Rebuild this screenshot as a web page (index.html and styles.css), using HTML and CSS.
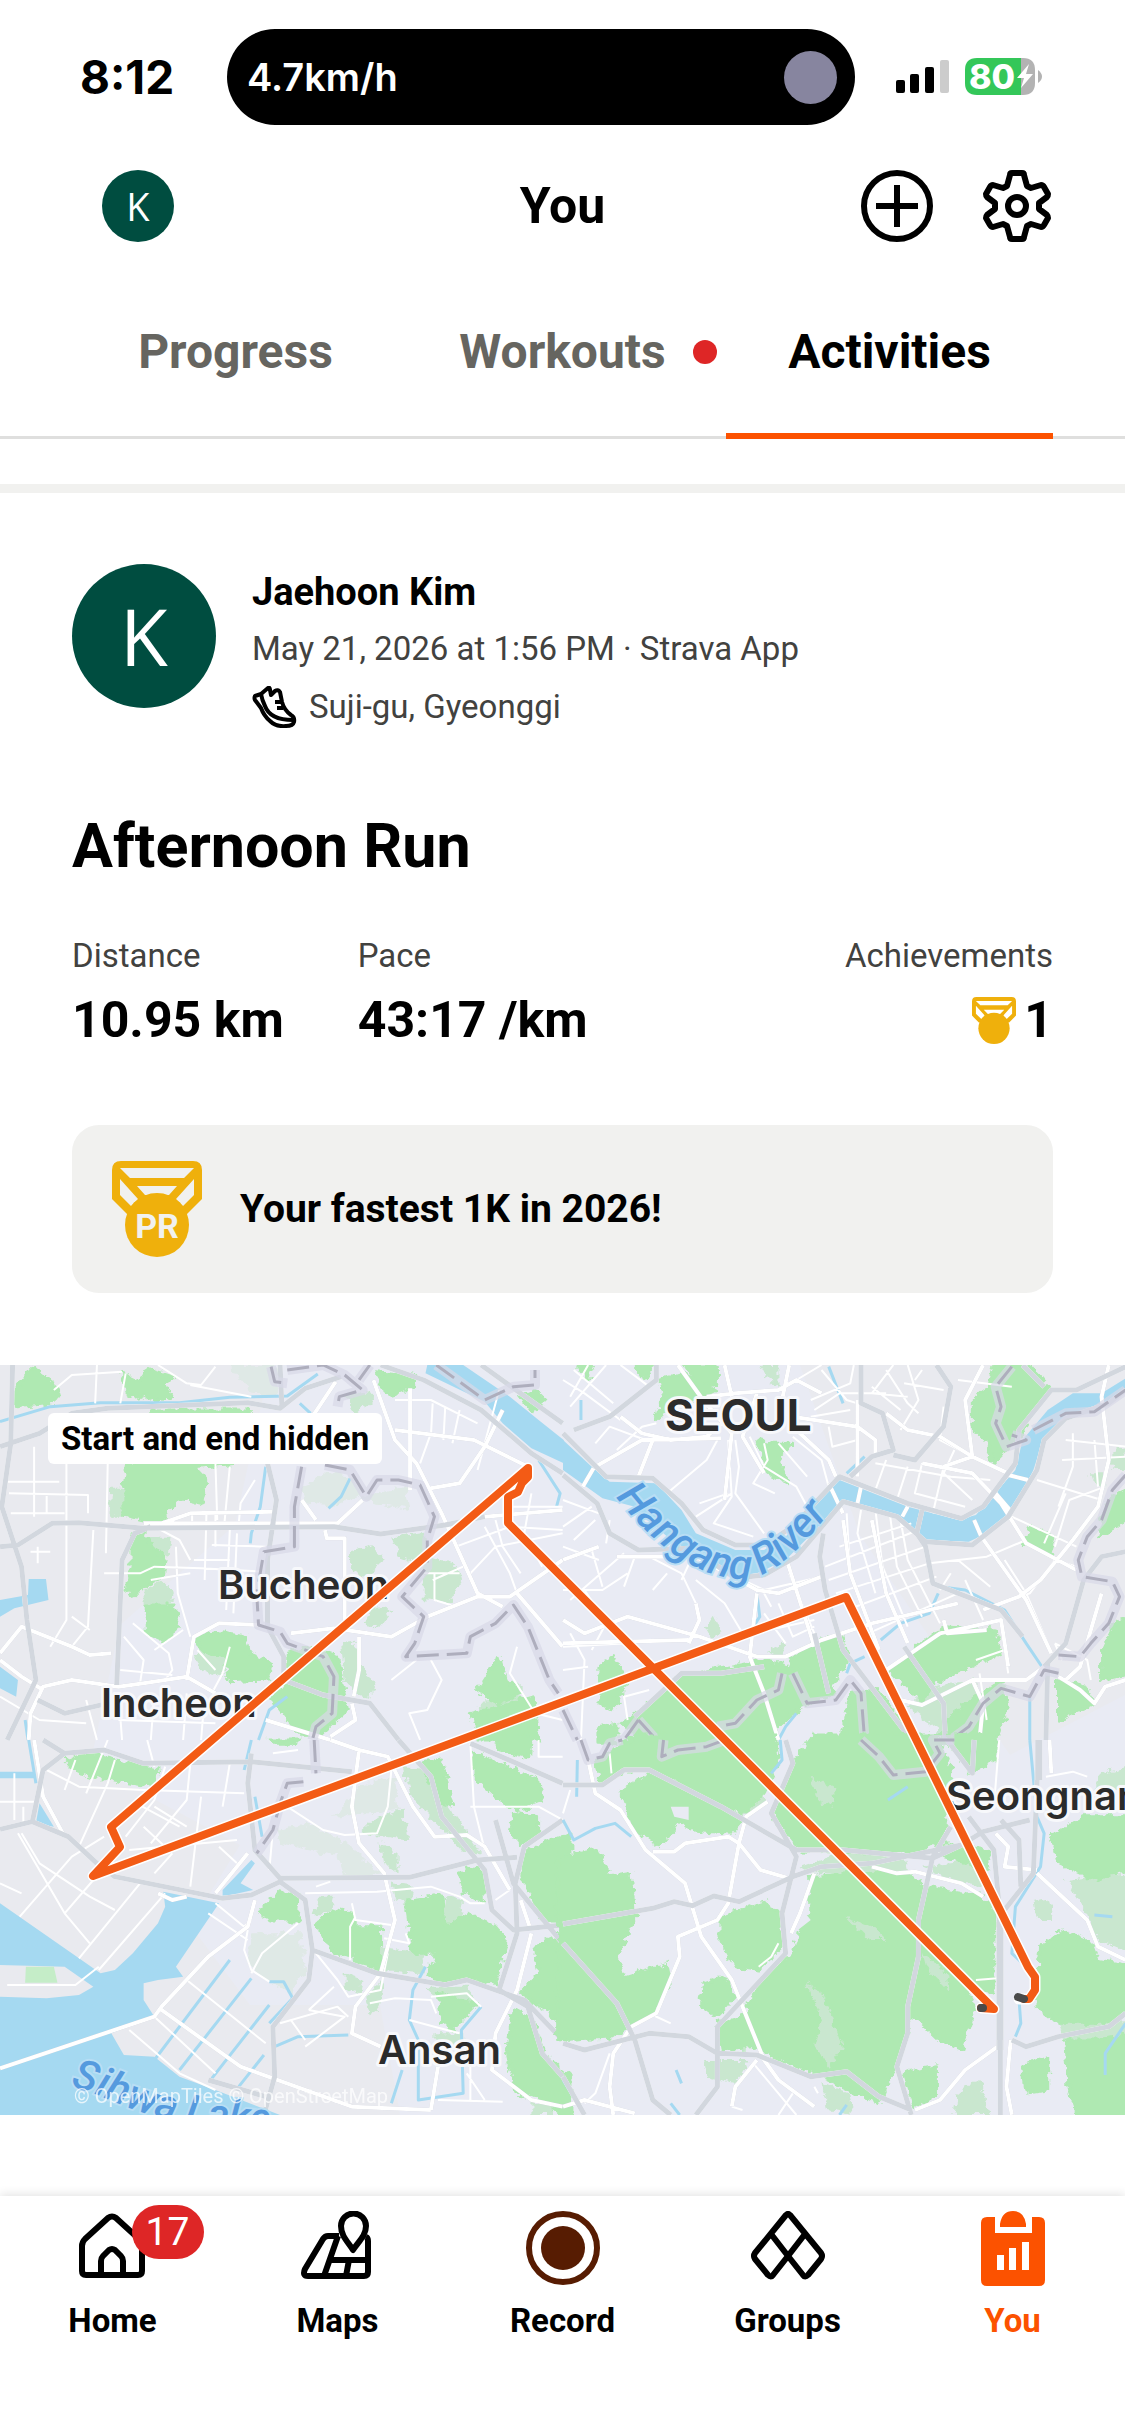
FILE: index.html
```html
<!DOCTYPE html>
<html lang="en">
<head>
<meta charset="utf-8">
<meta name="viewport" content="width=device-width, initial-scale=1">
<title>You – Activities</title>
<link rel="stylesheet" href="styles.css">
</head>
<body>
<div class="status">
  <span class="clock">8:12</span>
  <div class="island"><span>4.7km/h</span><i class="island-dot"></i></div>
  <div class="status-icons">
    <svg class="signal" viewBox="0 0 54 34" aria-hidden="true">
      <rect x="0" y="20" width="9" height="13" rx="2"/><rect x="14" y="14" width="9" height="19" rx="2"/><rect x="29" y="7" width="9" height="26" rx="2"/><rect x="44" y="0" width="9" height="33" rx="2" fill="#ccc"/>
    </svg>
    <svg class="battery" viewBox="0 0 78 38" role="img" aria-label="Battery 80%, charging">
      <path d="M12 0H56V37H12Q0 37 0 25V12Q0 0 12 0Z" fill="#34c759"/>
      <path d="M56 0H58Q70 0 70 12V25Q70 37 58 37H56Z" fill="#b3b3b3"/>
      <path d="M73 12Q77 15 77 18.500Q77 22 73 25Z" fill="#b3b3b3"/>
      <text x="4" y="31" class="battery-text">80</text>
      <path d="M64 6L52 20H59L56 30L68 16H61Z" fill="#fff"/>
    </svg>
  </div>
</div>

<header class="topbar">
  <button class="avatar avatar-small" aria-label="Profile">K</button>
  <h1>You</h1>
  <div class="actions">
    <button aria-label="Add"><svg viewBox="0 0 72 72"><g class="line"><circle cx="36" cy="36" r="33"/><path d="M36 15V57M15 36H57"/></g></svg></button>
    <button aria-label="Settings"><svg viewBox="-36 -36 72 72"><g class="line"><path d="M-5-33H5Q7-33 7-31L10-20L14-18L24-21Q26-21 27-19L31-12Q31-10 30-9L22-3V3L30 9Q31 10 31 12L27 19Q26 21 24 21L14 18L10 20L7 31Q7 33 5 33H-5Q-7 33-7 31L-10 20L-14 18L-24 21Q-26 21-27 19L-31 12Q-31 10-30 9L-22 3V-3L-30-9Q-31-10-31-12L-27-19Q-26-21-24-21L-14-18L-10-20L-7-31Q-7-33-5-33Z"/><circle r="9"/></g></svg></button>
  </div>
</header>

<nav class="tabs" aria-label="Sections">
  <button>Progress</button>
  <button>Workouts<i class="dot"></i></button>
  <button class="active">Activities</button>
</nav>

<main>
<article class="activity">
  <header class="athlete">
    <div class="avatar">K</div>
    <div class="who">
      <h2>Jaehoon Kim</h2>
      <p>May 21, 2026 at 1:56 PM · Strava App</p>
      <p class="place">
        <svg class="shoe" viewBox="0 0 45 42" aria-hidden="true"><path d="M3 10L9 8L16 2Q18 1 18 4L19 9L23 5Q26 3 28 6L30 16Q32 24 39 29Q43 31 42 36Q41 40 34 40Q24 41 18 35Q12 30 9 22L3 14Q2 12 3 10Z"/><path d="M9 8Q10 14 13 20Q18 34 41 34M23 16H29M25 22H31"/></svg>
        <span>Suji-gu, Gyeonggi</span>
      </p>
    </div>
  </header>
  <h3>Afternoon Run</h3>
  <dl class="stats">
    <div><dt>Distance</dt><dd>10.95 km</dd></div>
    <div><dt>Pace</dt><dd>43:17 /km</dd></div>
    <div class="achievements"><dt>Achievements</dt><dd>
      <svg class="medal-small" viewBox="0 0 90 96" aria-hidden="true"><path fill-rule="evenodd" d="M9 0H81Q90 0 90 9V38L76 52H14L0 38V9Q0 0 9 0ZM8 8H82L73 17H17ZM8 18V34L19 45L26 38ZM82 18V34L71 45L64 38ZM24 26H66L57 35H33Z"/><circle cx="45" cy="64" r="32"/></svg>1</dd></div>
  </dl>
  <div class="record-card">
    <svg class="medal" viewBox="0 0 90 96" role="img" aria-label="Personal record"><path fill-rule="evenodd" d="M9 0H81Q90 0 90 9V38L74 54H16L0 38V9Q0 0 9 0ZM8 7H82L72 17H18ZM8 18V34L19 45L26 38ZM82 18V34L71 45L64 38ZM25 25H65L57 34H33Z"/><circle cx="45" cy="64" r="32"/><text x="45" y="77" text-anchor="middle">PR</text></svg>
    <p>Your fastest 1K in 2026!</p>
  </div>
  <figure class="map">
    <svg viewBox="0 0 1125 750" role="img" aria-label="Route map from Seongnam to Incheon and Seoul">
      <defs>
        <filter id="ragged" x="-5%" y="-5%" width="110%" height="110%"><feTurbulence type="fractalNoise" baseFrequency="0.045" numOctaves="3" seed="4"/><feDisplacementMap in="SourceGraphic" scale="30" xChannelSelector="R" yChannelSelector="G"/></filter>
      </defs>
      <rect width="1125" height="750" fill="#e9ebf4"/>
      <path d="M0 0H270L235 160L120 260L90 400L240 480L190 560L250 640L380 640L400 750H0ZM800 0H1125V330L1010 390L860 170Z" fill="#e9eaef"/>

      <g transform="translate(0 -5) scale(.35906 .33333)">
        <path class="scrub" d="M640 15H770V110L700 100ZM845 380L900 340L980 350L1010 400L930 440L850 430ZM1000 410L1130 380L1140 450L1040 430Z"/>
        <path class="wood-pale" d="M310 380H345V470H305ZM975 570L1030 555L1075 600L1010 660L975 620ZM1090 530L1180 515L1200 590L1260 610L1290 660L1250 730L1180 720V620L1110 590ZM1040 740L1095 750L1060 800L1015 795ZM950 850L985 845L1010 920L1050 990L1010 1020L960 960ZM400 530H475L470 590L430 580ZM400 690L450 660L485 700L470 740H400ZM540 880L640 840L620 950L560 930ZM960 110L1020 90L1045 120L990 160ZM1390 980L1450 970L1450 1020L1330 1050Z"/>
        <path class="wood" d="M40 90L90 25L165 85L150 130L40 140ZM340 40L380 60L420 30L480 50L460 75L475 110L430 125L400 105L360 115ZM350 310L640 290L660 310L540 320L575 360L560 430L500 415L440 490L345 465V370ZM420 150H690L700 170H420ZM365 530L400 520L425 560L460 600L455 650L400 680L375 710L350 690L365 620ZM410 735H485L500 800L455 840L410 820ZM545 830L600 815L680 830L690 880L760 910L745 960L640 965L625 890L560 870ZM800 880L860 860L940 890L970 1050L900 1120H830L760 1020L800 960ZM1050 35L1155 45V75L1090 105L1060 80ZM1445 110L1490 90L1520 120L1480 155ZM1390 890L1410 960L1450 1000L1390 1030L1330 990L1360 940ZM1310 1060L1490 1010L1500 1140H1330Z"/>
        <path class="water" d="M80 657H128L135 720L40 745L0 770V720L78 705ZM1190 15H1290L1420 110L1500 180L1570 240V310L1480 265L1400 190L1350 125L1185 40ZM0 920L50 960L45 1010L0 985Z"/>
        <path class="stream" d="M0 185L140 140L280 128H500L640 112L800 108L885 42M740 320L725 440L700 520L697 550M975 355L950 410L915 445M800 1010L750 1050L720 1140M835 130L865 160M1500 300L1560 400L1550 440M70 1080L78 1140"/>
        <path class="minor" d="M22 365H165M30 460H180M25 400L245 405V460M185 300V780L140 860M95 260V470M130 400V460M300 310L295 580M260 510L245 800L200 860M270 15L265 130M350 40L335 130M150 90L200 45L340 35M440 15L520 70L560 75L600 20M530 75L700 110M85 575H140M105 560V610M290 640L390 640L430 620L560 625L730 635M420 660L530 640M490 560L495 700L530 830M600 310L605 480M640 320L625 490M710 360L670 430L665 490M430 500L500 540L530 600M535 460V500M575 460L570 660M600 460V560M640 510L630 750M660 520L650 760M540 600H640M590 555L740 560M370 790L470 880L480 930L460 960M345 830L400 900L390 970M510 810L430 870M640 860L620 940L590 1000M550 870L600 930M335 930L480 945M1100 120L1200 120L1330 190M1205 130L1200 230M1240 140L1235 240M1280 150L1260 250M1170 310L1200 220M1390 90L1330 330M1270 560L1420 500L1567 510M1310 640L1380 560L1567 520M1380 480L1400 560L1450 640M1350 500L1420 640L1440 700M1205 660L1290 620M1210 640V720L1270 740M1180 640H1280M1480 400L1460 520L1510 620M1420 440H1567M1090 960L1160 900M1200 900L1230 960L1190 1050L1140 1060L1170 1140M1440 860L1420 940L1490 1060L1567 1080M200 770L250 810M0 1010L110 1080L240 1090M240 1020L270 1140M330 1000L340 1140M430 1000L420 1140M520 1000L510 1140M570 1010L560 1140M330 1080L600 1090"/>
        <path class="major" d="M1040 60L1100 240L1160 310L1230 460L1330 700L1400 740M1100 210L1320 240L1470 320M1400 150L1350 260L1280 370L1200 385M450 490L530 460L760 455M400 490H940L1010 420M905 510L910 535H960V790M810 820L930 805L1090 830L1190 770L1330 710H1420L1567 600M520 960L540 830L610 790L720 795M0 880L60 800L200 860L250 885L310 880M80 1140L85 1060L120 980L200 960L330 980L400 970L520 950L600 1000M1000 830V930L985 1010M870 170L935 65M1142 85V390M1350 470L1567 450M1567 860L1440 700M840 420L880 480M0 900L60 950L120 990M740 1080L830 1110L920 1140M980 1030L990 1080L920 1130"/>
        <path class="motorway" d="M35 15L30 250L5 440L60 620L75 780L100 960L20 1140M0 260L110 220L200 160L300 145L690 128L780 145L850 85L950 50M0 560L50 555L145 490L220 488L400 505L930 500L1060 522L1240 495L1350 470M325 975L340 600L375 520L420 500M745 310L770 420L745 600V800L790 890V960L900 1005L1030 1030L1110 1140M1060 15L1180 60L1340 150L1480 280L1567 340M1340 15L1567 190M780 15L785 140M105 1020L180 1060L300 1030"/>
        <path class="halo" d="M755 20L765 65L800 70M800 30L900 15L960 45L1010 90L945 110L940 140M1030 15L1000 60M1215 15L1350 120L1430 80L1490 75V30M840 320L820 440V560L735 575L715 700L720 795L780 815L800 850L900 890L930 950L925 1060L880 1100L870 1140M905 315L975 330L1020 410L1050 360H1110L1170 375L1210 470L1190 540V620L1120 710L1180 770L1155 850L1130 890L1300 880L1310 830L1380 790L1430 735L1470 800L1530 960L1555 1000"/>
        <path class="border" d="M755 20L765 65L800 70M800 30L900 15L960 45L1010 90L945 110L940 140M1030 15L1000 60M1215 15L1350 120L1430 80L1490 75V30M840 320L820 440V560L735 575L715 700L720 795L780 815L800 850L900 890L930 950L925 1060L880 1100L870 1140M905 315L975 330L1020 410L1050 360H1110L1170 375L1210 470L1190 540V620L1120 710L1180 770L1155 850L1130 890L1300 880L1310 830L1380 790L1430 735L1470 800L1530 960L1555 1000"/>
      </g>

      <g transform="translate(563 -5) scale(.35906 .33333)">
        <path class="wood-pale" d="M1020 980L1150 960L1160 1060L1080 1140L960 1040ZM550 15H600L600 80L570 60ZM400 800L420 770L440 820L420 840ZM1470 340H1510V390L1480 370ZM570 870L620 850L610 890ZM1530 270L1567 260V330H1530Z"/>
        <path class="wood" d="M270 60L330 40L430 90L370 120L310 130L260 180L280 110ZM340 15H430V70L380 80ZM40 15H85L70 60ZM200 15H250L230 60ZM540 240L580 250H640L600 290L625 365L570 340ZM1140 120L1190 80L1200 15H1300L1360 90L1320 130L1270 230L1200 310L1180 230L1140 210ZM1300 500L1370 530L1355 585L1285 550ZM910 930L1060 800L1200 810L1220 880L1150 910L1030 970L1000 1030ZM630 900L720 830H780L790 900L740 990L650 950ZM250 1150L160 1090L230 1040L310 960L420 930L560 900L700 940L760 1000L660 1040L600 1100L560 1150ZM100 920L140 890L180 960L140 1050L100 1030ZM800 1000L870 990L960 1100L980 1150H770ZM1060 1080L1220 960L1240 1040L1200 1150H1060ZM1380 960L1450 980L1480 1030L1380 1080ZM1500 870L1530 800L1580 760V940L1500 960ZM1580 380L1520 420L1490 530L1540 500L1580 470ZM100 1100L150 1090V1150H100Z"/>
        <path class="water" d="M0 240L80 320L130 365L260 370L330 450L370 520L480 570H560L620 530L740 385L770 360L960 440L1100 480L1150 465L1260 330L1280 240L1350 150L1420 100H1500L1567 55V95L1500 150L1390 180L1340 230L1310 330L1260 440L1200 510L1130 545L1010 540L970 500L920 465L780 425L740 470L620 600L540 640L480 650L400 600L300 540L200 440L110 415L0 330Z"/>
        <path class="stream" d="M740 20L780 130M50 120V180M840 290L790 340M540 700L548 770L530 800M885 840L940 790L1020 760L1045 700M1050 680L1120 690L1230 750L1290 850L1340 930M840 890L800 910L790 940M1300 1010V1140M650 1060L620 1100L600 1140"/>
        <path class="minor" d="M0 60L60 100L160 180M20 140L120 15M70 15L20 110M30 30L140 130M160 15L240 80M90 250L130 200L230 240M150 270L220 200L260 190M430 240L400 300L290 400M460 240L470 410L420 490L530 530M480 240L490 320L480 400L560 520M380 430L460 400M370 470L470 400M520 230L560 320L650 380L680 440M560 250L570 300L530 370L590 400M600 250L680 350M640 230L720 300L740 380M650 60L720 15M690 120L800 70L810 15M700 150L770 100L900 100M720 30L790 120L820 130M690 170L800 150M740 200L750 260L820 240M860 80L940 150M900 30L960 130L990 160M920 15L860 100L960 110M950 70L1060 90M960 15L990 120L940 210M1000 30L980 60M1100 60L1250 80M870 310L1080 350L1190 360M900 300L870 390M960 320L930 420M1000 310L980 400L1120 440M1060 320L1030 460M1090 270L1060 340L1140 420M1060 140L1050 240L1140 290M790 460L800 640M830 450L820 520L870 700M870 450L890 620L960 800M910 460L930 620L1000 770M940 480L960 600L1050 790M740 660L1010 560M760 700L1020 610M790 750L1040 650M830 830L1100 700M730 620L990 510M770 560L970 490M1020 610L1180 590L1290 540M1100 600L1190 680M1080 640L1050 690M1120 660L1170 780M1190 740L1300 700L1370 600M1230 600L1290 700L1350 850M1370 560L1410 420L1510 380M1340 550L1400 400M1400 240L1567 260M1390 300L1567 290M1320 360L1500 420M1250 470L1430 560M1430 620L1370 600M1420 220V320L1380 440M1480 240L1490 380M0 690H110L180 640M20 720L170 580M80 570L110 680M200 590L170 680M240 590L330 640L370 730M250 690L290 640M360 590L330 660M370 660L450 730L500 820M60 690L120 790L80 870M0 420L100 460M0 500L80 440M30 540L90 480M0 560L100 600M120 550L130 480M600 730L640 830L700 800M560 760L620 850M530 820L700 780M560 700L580 740M630 640L700 820M500 660L560 690L720 650M20 820L60 900L50 1140M0 860L180 850M0 930L70 920M1150 900L1230 870L1240 940M180 1080L170 1010L240 990M1160 940L1180 1080M1370 850L1460 900L1470 960M1390 900L1370 850"/>
        <path class="major" d="M320 15L390 120L470 220L450 420M400 110L480 100L600 90L650 60L720 100M450 15L470 110M630 15L610 120L640 200L740 300L760 350M540 100L500 230L560 340M160 170L220 220L300 240L400 230L440 190L500 210M90 320L220 240L440 235M210 350L250 240M640 170L700 180L820 200L870 240V280M820 120V350M900 160L960 210L1050 230L1140 290L1240 340M1170 15L1120 120L1140 290L1060 320M1000 310L1140 340L1220 430L1290 550L1430 630M1520 15L1500 110L1520 300L1490 440L1420 540L1330 660L1270 710L1170 750M85 325L55 380M830 380L820 430M960 440L945 470M1145 480L1165 530M1205 400L1245 450M1240 345L1295 360M780 480L800 640L880 870M860 480L900 700L960 850M740 370L780 460M0 600L100 560M150 590L370 590L540 690L600 700L720 650M540 700L520 890L560 1000L600 1140M0 780L60 820L180 770L380 830L540 890L620 890L720 840L860 790L1100 730M0 850L350 840M370 730L380 780L350 850M620 590L700 860M1165 530L1290 720L1360 880M900 930L1050 820L1220 780L1240 920M940 1020L1000 1035L1140 960H1290L1340 920M1140 960L1170 1030L1160 1140M1380 950L1440 990L1480 1030L1510 980L1567 960M1500 700L1440 920L1400 960M1060 780L1070 820L1180 810"/>
        <path class="motorway" d="M0 345L95 430L130 520L210 570L360 565L480 655L560 645L650 590L780 425L930 470L1010 545L1140 555L1240 470L1320 330L1340 240L1400 175L1520 130L1567 90M0 220L120 350L250 355L330 430L390 510L480 555H560L640 500L770 350L960 430L1110 475L1170 440L1260 310L1270 210L1360 90H1430L1567 20M830 15V130L890 160L920 270L860 290L800 350M920 285L980 300L1060 200L1080 80L1040 15M30 210L130 170L260 60V15M725 520L715 590L730 690L780 870L900 1040L970 1140M1000 450L985 520L1010 560L1030 670L1220 750L1280 830M1340 920L1400 850L1450 660L1500 590L1567 575M1350 910L1345 1140M950 860L1060 1030L1065 1140M700 820L740 1000M200 1070L330 940H380L440 940L560 920M1280 15L1340 80"/>
        <path class="halo" d="M1250 20L1205 80L1220 140L1205 190L1235 260L1290 240L1250 225M1310 210L1400 160L1480 155L1567 90M1567 345L1530 390L1500 480L1460 530L1435 600L1445 650L1530 665L1550 710L1520 790L1470 850L1440 890L1380 885M1380 940L1340 930L1300 1010L1220 985L1170 1030L1130 1100L1080 1140M610 940L600 990L540 1020L480 1090L430 1100M640 940L680 1030L760 1020L800 960L830 1000L840 1140M210 1080L260 1140M210 1080L170 1140M0 1050L40 1140"/>
        <path class="border" d="M1250 20L1205 80L1220 140L1205 190L1235 260L1290 240L1250 225M1310 210L1400 160L1480 155L1567 90M1567 345L1530 390L1500 480L1460 530L1435 600L1445 650L1530 665L1550 710L1520 790L1470 850L1440 890L1380 885M1380 940L1340 930L1300 1010L1220 985L1170 1030L1130 1100L1080 1140M610 940L600 990L540 1020L480 1090L430 1100M640 940L680 1030L760 1020L800 960L830 1000L840 1140M210 1080L260 1140M210 1080L170 1140M0 1050L40 1140"/>
      </g>

      <g transform="translate(0 375) scale(.35906 .33333)">
        <path class="scrub" d="M770 270L870 250L990 330L1060 400L960 420L940 350L780 310ZM700 580H840L850 700L810 760L740 720L690 670ZM1000 140L1100 110L1110 210L930 230Z"/>
        <path class="wood-pale" d="M1060 620L1180 640V700L1060 690ZM1120 80L1180 90L1250 200L1320 310L1340 340H1290L1220 260L1150 180ZM890 470H930L920 520H870ZM960 700L1010 720L1000 765L960 740ZM1060 310L1110 340V400L1070 370ZM1040 240L1120 210L1140 300L1000 280ZM1090 430L1150 440L1140 500L1100 480ZM1180 740L1300 740L1340 800L1220 780ZM1020 770L1070 720L1060 790L1030 830ZM1240 470L1290 480L1280 540L1230 560ZM1210 880H1290V920H1210ZM1480 1090L1540 1080V1125H1480Z"/>
        <path class="wood" d="M180 60L240 40L320 60L440 90L430 140L310 120L210 95ZM730 500L780 455L835 470L830 540L750 540L720 520ZM880 550L940 510L985 520L980 650L930 640ZM985 560L1060 560V690L990 670ZM1130 480L1230 465L1240 560L1300 520L1380 560L1410 600L1380 730L1290 715L1220 730L1190 700L1220 640L1150 640ZM1280 400L1340 375L1350 480L1290 460ZM1170 70L1230 60L1260 200L1230 190ZM1370 -15H1480L1475 50L1390 30ZM1320 40L1500 120L1510 180L1440 210L1380 170L1320 110ZM1430 220L1500 230V290L1450 310L1420 270ZM1590 280L1470 330L1450 400L1510 540H1590ZM1590 570L1490 620L1500 700L1450 760L1520 810L1590 870ZM1220 760L1330 790L1260 870L1230 840ZM1430 810L1480 840L1520 950L1590 1010V1145L1500 1070L1440 1060L1410 930ZM750 0H830V10H760Z"/>
        <path class="water" d="M0 490L280 700L320 690L370 640L440 550L460 500L455 455L610 490L490 680L510 710L440 720L400 730V780L430 830L310 880L345 945L430 950L500 1010L600 1050L780 1125H0V770L130 775L220 765L260 740L180 680L0 675ZM620 450L700 360L710 370L670 430L705 450L620 470ZM0 95H95V115H0ZM110 190L150 260L100 250Z"/>
        <path d="M72 680H150L160 728H70Z" fill="#c5edc8"/>
        <path class="stream" d="M640 660L430 960M700 715L500 990M750 795L590 1015M735 945L665 1040M970 885L830 890L765 920M1185 680L1150 750L1140 840L1165 900V1080L1290 1060L1285 870L1340 800M750 725H790L815 775L750 850M710 170L730 290M700 0L680 90M80 0L100 130M1120 990L1090 1090"/>
        <path class="minor" d="M50 280L180 520L250 610M60 280L110 370L250 470L320 510M55 530L200 350L290 290M180 520L260 420M220 655L390 430M275 690L460 460M0 430L60 460M20 735H210L275 680M0 185H95M40 100V240M65 200V245M130 90L220 140L400 150L680 160M210 60L180 150M320 60L300 130L220 320M300 0L240 160M410 0L430 80M530 70L520 180L420 310M460 80L430 180L350 290M640 70L620 200M560 170L530 440M380 190L500 260M430 200L520 260M360 330L660 300M400 260L460 320M610 320L660 370M480 340L430 400M430 830L600 1000M520 720L740 910M580 520L690 600M600 490L680 560L700 540M690 570L680 630L700 690L750 725M700 700L730 640L830 550M850 460L1050 455L1200 440L1280 470L1310 490H1350M880 440L920 425M800 200L900 270L960 285L1050 280L1080 200L1090 90M760 270L750 390M980 490L990 540L1090 555M975 660V560L990 530M880 640L940 720L970 770L1060 750L1080 640M860 810L930 740M860 810L960 830L850 920M780 850L940 800L970 830M810 840L850 900M360 870L500 1000L600 1050M1030 790L1100 775L1200 780L1215 820M1200 770L1300 760L1340 800M1310 10L1320 200L1350 330M1310 200H1500L1567 240M1500 0V50H1567M1130 580L1140 610L1070 595M1380 480L1420 450M1220 1080L1400 1085M1300 1000L1350 1080M1310 980V1080M1140 840L1210 860L1280 880M760 40L830 30"/>
        <path class="major" d="M95 0L120 170L180 290M920 0L1000 30L980 200L1000 310L1070 400L1100 540L1060 700L990 800L980 880L1060 920M1000 30L1080 50L1150 200L1210 290L1300 285L1350 320L1420 450M710 480L690 560L580 650L450 800L430 830L0 985M450 810L670 980L980 1100L1200 1110M1220 980L1200 1110M1480 580L1440 750L1380 880L1370 990L1480 1080L1567 1100M690 340L600 460M440 460L480 480L520 470M1450 480L1475 560"/>
        <path class="motorway" d="M120 0L180 40L290 30L400 70L700 65L980 95M180 40L120 90L90 245L0 268M90 245L190 290L270 370L320 410L620 475L700 465L780 425L850 480L870 630L860 720L760 860L765 1010L735 1125M700 40L690 130L710 330L780 415L1140 412L1330 360L1440 352M870 630L1050 700L1240 735L1300 720L1460 780L1567 900M1110 0L1200 110L1230 230L1350 390L1370 510L1430 570L1567 555M1380 240L1430 430L1567 610M1310 10L1567 130M1567 240L1460 320L1435 430L1440 580L1390 750L1470 800L1510 940L1567 1010M580 1020L740 1070"/>
        <path class="halo" d="M875 0L880 100M845 125L800 130L780 190L760 270L715 340"/>
        <path class="border" d="M875 0L880 100M845 125L800 130L780 190L760 270L715 340"/>
      </g>

      <g transform="translate(563 375) scale(.35906 .33333)">
        <path class="wood-pale" d="M1000 380L1150 360L1180 440L1100 430ZM1400 420L1580 400V640L1490 600L1460 520ZM390 960H520L480 1030L400 1010ZM720 1030L800 1060L810 1125L740 1110ZM1100 1060L1160 1020L1190 1125H1090ZM660 380L800 330L950 350L960 400L690 400ZM1310 480L1350 470L1370 540L1320 540ZM470 150L560 140L570 190L500 230ZM1380 850L1580 840V920L1400 900ZM1500 100L1580 80V150L1480 150Z"/>
        <path class="wood" d="M90 60L210 -15H590L600 60L560 160L500 220L440 200L260 90H170L110 130ZM160 150L250 100L440 200L500 240L470 280L360 270L330 240L270 320L200 270ZM640 70L700 -15H1040L1080 90L1060 300L980 340L660 330L590 240ZM1070 -15H1210L1200 60L1140 100ZM-15 350L100 330L130 410L190 400L200 540L150 640L170 710L290 670L300 720L250 820L180 860L140 890L-15 900ZM390 730L450 710L480 770L430 830L380 790ZM440 530L560 490L610 520V620L540 690L480 680L440 600ZM690 410L800 400H950L1020 440L1170 470L1200 520V760L1120 740L1150 800L1110 930L1050 900L970 820L930 960L880 1090L720 1010L560 940L510 800L560 720L640 640L660 560L690 520ZM1360 290L1450 230H1590V380L1480 420L1380 370ZM1330 620L1390 570L1470 610L1490 660L1590 680V800L1520 850H1380L1320 800ZM1400 900L1500 900L1590 880V1145H1440L1410 1050ZM950 1000L1040 980V1060L980 1100ZM1280 980L1350 950V1050L1290 1060ZM430 850L520 820L550 920L440 930ZM1050 310L1180 330L1190 390L1060 350Z"/>
        <path class="wood-pale" d="M790 530L860 560L900 600L850 600ZM680 730L720 760L780 920L740 980L700 920L720 840ZM1000 640L1070 700L1080 760L1010 680ZM690 110L760 150L750 200L710 180Z"/>
        <path d="M620 500L660 500L690 540L630 590ZM300 200L350 200L350 240L310 230Z" fill="#e9ebf4"/>
        <path class="stream" d="M0 240L30 300L90 265L145 250L190 290M605 0L610 60L580 100M960 140L905 180M1300 0L1320 230L1340 280L1330 380L1260 500L1250 640L1290 680M1270 780L1275 850L1260 890M1567 850L1510 940V1005M40 60L38 170M1480 525L1530 530M315 990L330 1030M0 1020L40 1090M300 1090L325 1125M790 1095L770 1125"/>
        <path class="minor" d="M530 970L650 1125M640 1060L600 1125M470 1100L500 1110M130 940L90 1060L60 1090M250 825L300 850M600 610L580 650L545 680M1150 720L1210 715M1215 0L1200 200M1345 110L1420 95L1460 110M130 40L135 100M700 1040L710 1060M20 150L0 220"/>
        <path class="major" d="M70 60L90 160L160 210L230 330L340 430L385 590L470 720L560 960L600 1020L700 1100M250 335H310L340 310L460 290L490 310L550 390L630 415M570 185L510 230L490 310L460 490L430 540L320 590L325 650L260 820L190 860L140 940L130 1040L140 1125M860 380L930 400L980 395L1110 430L1170 470M1320 400L1460 540L1490 620L1567 660M1210 920L1120 990L1050 1080L980 1110M1247 900L1235 1040L1250 1125M1355 0L1360 100M1205 280L1240 320L1230 380L1320 390M470 1100L480 1040L540 960M700 400L660 520L635 580M0 1100L60 1080L200 1120"/>
        <path class="motorway" d="M0 135H110L170 90H240L440 200L650 330H780L1030 355L1110 315L1170 275L1300 240M0 552L250 505L310 485L360 497L420 468L490 485L640 410L720 380L860 370L1040 330L1110 315M620 0L640 70L580 220L650 350L610 520L620 640L430 860V1040L370 1125M0 610L150 790L200 900L250 1080L300 1125M0 910L60 930L240 880L350 890L430 940L540 945L690 1010L790 995L880 1070L970 1110M1080 260L1030 350L990 540V650L960 800V880L930 980L970 1125M1325 0L1310 400L1215 530M1130 230L1200 330L1215 500M1250 900L1290 920L1380 890L1520 860L1567 820M1220 240L1270 300L1275 440M1145 0L1140 100L1070 0M0 1010L60 1125"/>
        <path class="motorway wide" d="M1217 500V930M1325 0V120"/><path class="motorway" d="M1218 900V1125"/>
        <path class="halo" d="M50 0L70 60L110 50L130 10L165 0M280 0L275 50L320 30L400 20L450 0M830 0L880 50L920 105L1010 95L1050 40L1030 0H1090"/>
        <path class="border" d="M50 0L70 60L110 50L130 10L165 0M280 0L275 50L320 30L400 20L450 0M830 0L880 50L920 105L1010 95L1050 40L1030 0H1090"/>
      </g>

      <g class="city">
        <text x="665" y="66" class="capital">SEOUL</text>
        <text x="218" y="234">Bucheon</text>
        <text x="101" y="352">Incheon</text>
        <text x="946" y="445">Seongnam</text>
        <text x="378" y="699">Ansan</text>
      </g>
      <path id="han" d="M616 132C650 176 694 212 740 214C782 212 810 172 856 114" fill="none"/>
      <path id="sihwa" d="M70 722C110 728 140 764 280 768" fill="none"/>
      <g class="water-name"><text><textPath href="#han">Hangang River</textPath></text><text><textPath href="#sihwa">Sihwa Lake</textPath></text></g>
      <text x="74" y="738" class="credit">© OpenMapTiles © OpenStreetMap</text>

      <path class="route-edge" d="M981 643L994 644L508 158V132L518 127L522 118L528 112V103L111 462L120 482L93 511L846 232L1028 602L1035 612V625L1029 634H1019"/>
      <path class="route" d="M981 643L994 644L508 158V132L518 127L522 118L528 112V103L111 462L120 482L93 511L846 232L1028 602L1035 612V625L1029 634H1024"/>
      <path class="route-hidden" d="M981 643H983M1018 632L1024 634"/>
    </svg>
    <figcaption>Start and end hidden</figcaption>
  </figure>
</article>
</main>

<nav class="bottom" aria-label="Main">
  <a href="#home"><span class="icon"><svg viewBox="0 0 78 78"><g class="line"><path d="M8 60V35Q8 31 11 28L34 7Q38 4 42 7L65 28Q68 31 68 35V60Q68 64 64 64H12Q8 64 8 60Z"/><path d="M27 64V50Q27 47 29 45L35 39Q38 37 41 39L47 45Q49 47 49 50V64"/></g></svg><b class="badge">17</b></span>Home</a>
  <a href="#maps"><span class="icon"><svg viewBox="0 0 78 78"><g class="line"><path d="M54 39C49 31 42 25 42 15A12 12 0 0 1 67 15C67 25 59 31 54 39ZM40 25H29Q26 25 24 28L6 58Q3 65 9 65H65Q69 65 69 61V30Q69 27 67 26M39 25L25 65M32 49H69M50 49L47 65"/></g></svg></span>Maps</a>
  <a href="#record"><span class="icon"><svg viewBox="0 0 78 78"><circle cx="39" cy="37" r="34" fill="none" stroke="#571c02" stroke-width="6"/><circle cx="39" cy="37" r="22" fill="#571c02"/></svg></span>Record</a>
  <a href="#groups"><span class="icon"><svg viewBox="0 0 78 78"><g class="line"><path d="M37 4Q39 2 41 4L72 42Q74 45 72 48L59 64Q56 67 54 64L39 45L24 64Q22 67 19 64L6 48Q4 45 6 42ZM22 23L39 45L56 23"/></g></svg></span>Groups</a>
  <a href="#you" class="current"><span class="icon"><svg viewBox="0 0 78 78"><path fill="#fc5200" fill-rule="evenodd" d="M13 6H21V22H58V6H65Q71 6 71 12V69Q71 75 65 75H13Q7 75 7 69V12Q7 6 13 6ZM23 44V59H30V44ZM35 37V59H42V37ZM48 31V59H55V31ZM26 16V13Q28 0 39 0Q50 0 52 13V16Z"/></svg></span>You</a>
</nav>
</body>
</html>
```
FILE: styles.css
```css
* { box-sizing: border-box; margin: 0; padding: 0; }

body {
  min-height: 100vh;
  display: flex;
  flex-direction: column;
  background: #fff;
  color: #000;
  font-family: Roboto, "Liberation Sans", sans-serif;
}

button { border: 0; background: none; font: inherit; color: inherit; cursor: pointer; }
svg { display: block; }
.line { fill: none; stroke: #000; stroke-width: 6; stroke-linejoin: round; }

/* status bar */
.status {
  display: grid;
  grid-template-columns: 227fr 628fr 270fr;
  align-items: center;
  padding-top: 29px;
  font-family: Inter, sans-serif;
  font-weight: 600;
}
.clock { padding-left: 80px; font-size: 46px; font-weight: 700; }
.island {
  height: 96px;
  padding: 0 18px 0 20px;
  border-radius: 48px;
  background: #000;
  color: #fff;
  display: flex;
  align-items: center;
  justify-content: space-between;
  font-size: 38px;
}
.island-dot { width: 53px; height: 53px; border-radius: 50%; background: #87859f; }
.status-icons { display: flex; align-items: center; gap: 15px; padding-left: 41px; }
.signal { width: 54px; height: 34px; }
.battery { width: 78px; height: 38px; }
.battery-text { font-size: 34px; font-weight: 800; fill: #fff; }

/* title bar */
.topbar {
  display: grid;
  grid-template-columns: 1fr auto 1fr;
  align-items: center;
  padding: 45px 72px 0 72px;
}
.topbar h1 { font-size: 50px; line-height: 72px; font-weight: 700; }
.actions { display: flex; gap: 48px; justify-content: flex-end; }
.actions svg { width: 72px; height: 72px; }
.avatar {
  flex: none;
  width: 144px;
  height: 144px;
  border-radius: 50%;
  background: #004d40;
  color: #fff;
  display: flex;
  align-items: center;
  justify-content: center;
  font-family: "Open Sans", "Noto Sans", sans-serif;
  font-size: 78px;
}
.avatar-small { width: 72px; height: 72px; margin-left: 30px; font-size: 38px; }

/* section tabs */
.tabs {
  display: grid;
  grid-template-columns: repeat(3, 1fr);
  margin-top: 24px;
  padding: 0 72px;
  box-shadow: inset 0 -3px #dfdfde;
}
.tabs button { position: relative; height: 173px; padding-bottom: 3px; font-size: 48px; font-weight: 700; color: #666560; }
.tabs .active { color: #000; box-shadow: inset 0 -6px #fc5200; }
.dot {
  position: absolute;
  right: 9px;
  top: 74px;
  width: 24px;
  height: 24px;
  border-radius: 50%;
  background: #de2626;
}

/* activity card */
.activity { margin-top: 45px; border-top: 9px solid #f1f1ef; padding-top: 71px; }
.athlete { display: flex; gap: 36px; padding: 0 72px; }
.who h2 { font-size: 38px; line-height: 56px; font-weight: 700; }
.who p { font-size: 33px; line-height: 58px; color: #42423f; }
.place { display: flex; align-items: center; gap: 12px; }
.shoe { width: 45px; height: 42px; fill: none; stroke: #000; stroke-width: 4; stroke-linejoin: round; }
.activity h3 { margin-top: 74px; padding: 0 72px; font-size: 61px; line-height: 72px; font-weight: 700; }
.stats { display: flex; gap: 74px; margin-top: 52px; padding: 0 72px; }
.stats dt { font-size: 33px; line-height: 44px; color: #42423f; }
.stats dd { margin-top: 12px; font-size: 50px; line-height: 60px; font-weight: 700; }
.achievements { margin-left: auto; text-align: right; }
.achievements dd { display: flex; align-items: center; justify-content: flex-end; gap: 8px; }
.medal-small { width: 44px; height: 47px; fill: #efb00c; }

.record-card {
  display: flex;
  align-items: center;
  gap: 38px;
  margin: 75px 72px 72px;
  padding: 36px 40px;
  border-radius: 27px;
  background: #f1f1ef;
  font-size: 39px;
  font-weight: 700;
}
.medal { width: 90px; height: 96px; fill: #efb00c; }
.medal text { font-size: 34px; font-weight: 700; fill: #f1f1ef; }

/* map */
.map { position: relative; }
.map svg { width: 100%; height: auto; overflow: hidden; }
.map figcaption {
  position: absolute;
  left: 48px;
  top: 48px;
  padding: 0 13px;
  border-radius: 6px;
  background: #fff;
  font-size: 33px;
  line-height: 51px;
  font-weight: 700;
}
.scrub { fill: #dfe9e6; }
.wood { fill: #afe9b2; stroke: #afe9b2; stroke-width: 3; stroke-linejoin: round; vector-effect: non-scaling-stroke; }
.wood-pale { fill: #c9e7cf; }
.scrub, .wood, .wood-pale { filter: url(#ragged); }
.water { fill: #a5d9f1; }
.stream, .minor, .major, .motorway, .halo, .border {
  fill: none;
  stroke-linejoin: round;
  vector-effect: non-scaling-stroke;
}
.stream { stroke: #a5d9f1; stroke-width: 3; }
.minor { stroke: #fff; stroke-width: 2; }
.major { stroke: #fff; stroke-width: 4; filter: drop-shadow(0 0 2px #bfc3d0); }
.motorway { stroke: #d2d7de; stroke-width: 5; filter: drop-shadow(0 0 1px #fff); }
.wide { stroke-width: 7; }
.halo { stroke: #d9d9e8; stroke-width: 10; opacity: .7; }
.border { stroke: #aeaebd; stroke-width: 3; stroke-dasharray: 22 8; }
.city { font-family: Inter, sans-serif; font-size: 40px; font-weight: 600; fill: #2b2b2b; stroke: #f7f8fb; stroke-width: 6; stroke-linejoin: round; paint-order: stroke; }
.capital { font-size: 44px; font-weight: 700; }
.water-name { font-size: 42px; font-weight: 500; font-style: italic; fill: #559ade; stroke: #b8def5; stroke-width: 4; paint-order: stroke; }
.credit { font-size: 20px; fill: #fff; opacity: .75; }
.route-edge, .route, .route-hidden { fill: none; stroke-linejoin: round; stroke-linecap: round; }
.route-edge { stroke: #fff; stroke-width: 11; }
.route { stroke: #f35b15; stroke-width: 8; }
.route-hidden { stroke: #4a4a4a; stroke-width: 8; }

/* bottom navigation */
.bottom {
  position: sticky;
  bottom: 0;
  display: grid;
  grid-template-columns: repeat(5, 1fr);
  margin-top: auto;
  padding: 15px 0 93px;
  background: #fff;
  box-shadow: 0 -2px 9px #0000001c;
}
.bottom a {
  display: flex;
  flex-direction: column;
  align-items: center;
  gap: 10px;
  color: #000;
  text-decoration: none;
  font-size: 33px;
  line-height: 44px;
  font-weight: 700;
}
.icon { position: relative; }
.icon svg { width: 78px; height: 78px; }
.badge {
  position: absolute;
  left: 58px;
  top: -6px;
  width: 72px;
  height: 54px;
  border-radius: 27px;
  background: #de2626;
  color: #fff;
  font-size: 39px;
  line-height: 54px;
  font-weight: 400;
  text-align: center;
}
.bottom .current { color: #fc5200; }
```
